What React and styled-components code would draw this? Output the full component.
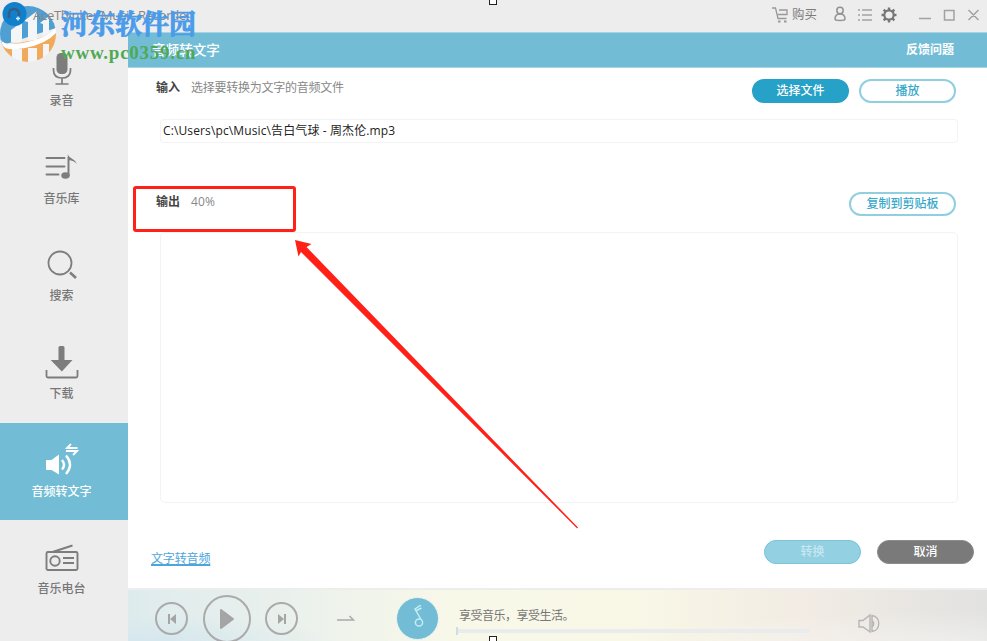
import React from "react";
import styled, { createGlobalStyle, css } from "styled-components";

const Global = createGlobalStyle`
  * { box-sizing: border-box; }
  body { margin: 0; background: #fff; overflow: hidden; }
  svg { display: block; flex: none; }
`;

const Window = styled.div`
  position: relative;
  width: 987px;
  height: 641px;
  overflow: hidden;
  display: flex;
  flex-direction: column;
  background: #fff;
  color: #444;
  font: 12px/16px "Open Sans", "Noto Sans CJK SC", sans-serif;
`;

const TitleBar = styled.header`
  height: 32px;
  flex: none;
  display: flex;
  align-items: center;
  padding: 0 5px 2px 33px;
  background: #ededed;
  color: #858585;
`;
const AppName = styled.span`
  position: relative;
  z-index: 1;
  flex: 1;
  font-size: 13px;
  letter-spacing: -0.28px;
`;
const Tools = styled.div`
  display: flex;
  align-items: center;
  width: 210px;
  padding-bottom: 1px;
`;
const Buy = styled.span`
  width: 38px;
  margin-left: 3px;
  font-size: 12.4px;
  color: #7c7c7c;
`;

const Body = styled.div`
  flex: 1;
  min-height: 0;
  display: flex;
`;
const Sidebar = styled.nav`
  width: 128px;
  flex: none;
  background: #ededed;
`;
const NavItem = styled.div`
  height: 97.7px;
  display: flex;
  flex-direction: column;
  align-items: center;
  justify-content: flex-start;
  padding: 16px 5px 0 0;
  font-size: 12px;
  font-weight: 500;
  color: #777;
  ${(p) => p.$active && css`background: #72bdd5; color: #fff;`}
`;
const NavLabel = styled.span`
  margin-top: 1px;
`;

const Main = styled.main`
  flex: 1;
  min-width: 0;
  display: flex;
  flex-direction: column;
`;
const Header = styled.div`
  height: 36px;
  flex: none;
  display: flex;
  align-items: center;
  justify-content: space-between;
  padding: 0 33px 1px 24px;
  background: #72bdd5;
  border-top: 1px solid #a5d5e4;
  border-bottom: 1px solid #a5d5e4;
  color: #fff;
  font-weight: 600;
`;
const PageTitle = styled.h1`
  margin: 0;
  font-size: 13.6px;
  font-weight: 500;
`;
const Content = styled.div`
  flex: 1;
  display: flex;
  flex-direction: column;
  padding: 0 29px 0 32px;
`;
const SectionRow = styled.div`
  display: flex;
  align-items: flex-start;
  height: ${(p) => p.$height}px;
  margin: ${(p) => p.$top}px 2px 0 -4px;
`;
const SectionName = styled.strong`
  width: 35px;
  padding-top: ${(p) => p.$drop || 1}px;
  font-weight: 600;
  color: #444;
`;
const Hint = styled.span`
  flex: 1;
  padding-top: ${(p) => p.$drop || 1}px;
  font-size: 12px;
  color: #888;
  letter-spacing: ${(p) => p.$spacing || -0.25}px;
`;
const Pill = styled.button`
  height: 24px;
  width: ${(p) => p.$width || 97}px;
  margin: 0 0 0 ${(p) => p.$gap || 0}px;
  padding: 0 0 2px;
  border-radius: 12px;
  border: 2px solid #90cfe0;
  background: #fff;
  color: #38a8ca;
  font: 500 12px/16px "Noto Sans CJK SC", sans-serif;
  ${(p) => p.$kind === "primary" && css`background: #26a1c7; border-color: #26a1c7; color: #fff;`}
  ${(p) => p.$kind === "disabled" && css`background: #93d0e1; border: 1px solid #7bc3d8; color: #c7e8f1;`}
  ${(p) => p.$kind === "cancel" && css`background: #7a7a7a; border: 1px solid #8b8b8b; color: #fff;`}
`;
const PathField = styled.div`
  height: 24px;
  width: 798px;
  border: 1px solid #f3f3f3;
  border-radius: 4px;
  padding: 3px 2px;
  color: #222;
  font-size: 12px;
  letter-spacing: 0.12px;
`;
const OutputBox = styled.div`
  height: 271px;
  width: 798px;
  border: 1px solid #f3f3f3;
  border-radius: 5px;
`;
const Actions = styled.div`
  display: flex;
  align-items: flex-start;
  margin: 37px -16px 0 -9px;
`;
const TextLink = styled.a`
  flex: 1;
  margin-top: 11px;
  color: #4da5dc;
  letter-spacing: -0.15px;
  text-decoration: underline;
  text-decoration-thickness: 1.5px;
  text-underline-offset: 1px;
`;

const Player = styled.footer`
  height: 53px;
  flex: none;
  overflow: hidden;
  display: flex;
  align-items: flex-start;
  border-top: 2px solid #ededed;
  padding-left: 27px;
  background:
    radial-gradient(ellipse 300px 30px at 96% 100%, rgba(255,255,255,.35), transparent),
    radial-gradient(ellipse 170px 26px at 4% 100%, rgba(207,228,238,.6), transparent),
    linear-gradient(90deg, #deebed 0%, #ebf1ec 20%, #f8f8e9 38%, #f9f8e7 58%, #f2ece4 78%, #e2e2e1 100%);
`;
const Controls = styled.div`
  display: flex;
  align-items: flex-start;
  width: 303px;
`;
const Round = styled.div`
  width: ${(p) => p.$size}px;
  height: ${(p) => p.$size}px;
  margin: ${(p) => p.$top}px ${(p) => p.$right || 0}px 0 0;
  border: 2px solid #aaa;
  border-radius: 50%;
  flex: none;
  display: flex;
  align-items: center;
  justify-content: center;
`;
const Disc = styled(Round)`
  border: 1.5px solid #eef4ef;
  background: #72bdd5;
`;
const Shuffle = styled.div`
  width: 60px;
  padding: 24px 0 0 1px;
`;
const Track = styled.div`
  width: 400px;
  padding: 18px 0 0 1px;
  color: #777;
  letter-spacing: -0.5px;
`;
const Seek = styled.div`
  height: 8px;
  width: 354px;
  margin: 3px 0 0 -3px;
  border-left: 2px solid #ccdee7;
  display: flex;
  align-items: center;
  &::after { content: ""; height: 4px; flex: 1; background: #e9ebec; }
`;
const Volume = styled.div`
  padding-top: 23px;
`;
const Overlay = styled.svg`
  position: absolute;
  inset: 0;
  pointer-events: none;
`;
const Watermark = styled.div`
  position: absolute;
  z-index: 2;
  left: 61px;
  top: 9px;
  white-space: nowrap;
  font-family: "Liberation Serif", "Noto Serif CJK SC", "Noto Sans CJK SC", serif;
  font-weight: 700;
`;
const SiteName = styled.div`
  font-size: 27px;
  line-height: 33px;
  color: #4a9bea;
  -webkit-text-stroke: 0.8px #4a9bea;
`;
const SiteUrl = styled.div`
  font-size: 19px;
  line-height: 21px;
  letter-spacing: 0.75px;
  color: #4fa953;
`;
const Handle = styled.div`
  position: absolute;
  left: 489px;
  ${(p) => (p.$bottom ? "bottom: -3px;" : "top: -3px;")}
  width: 8px;
  height: 8px;
  border: 1px solid #222;
  background: #fff;
`;

const MicIcon = () => (
  <svg width="34" height="44" viewBox="0 0 34 44" fill="none" stroke="#7d7d7d" strokeWidth="1.7">
    <rect x="11.500" y="5" width="11" height="21" rx="4.500" fill="#7d7d7d" stroke="none" />
    <path d="M8.500 20v2c0 6 4 8 8.500 8s8.500-2 8.500-8v-2M17 30v6M10.500 36h13" />
  </svg>
);
const LibraryIcon = () => (
  <svg width="34" height="44" viewBox="0 0 34 44" fill="none" stroke="#7d7d7d" strokeWidth="2" strokeLinecap="round">
    <path d="M1.500 12h18M1.500 20.500h18M1.500 28.500h12" />
    <path d="M23.500 30V11" strokeLinecap="butt" />
    <path d="M22.500 8.500q2 3 5 4.500t4.500 5q-3-3.500-8.500-4z" fill="#7d7d7d" stroke="none" />
    <ellipse cx="20.500" cy="29.500" rx="4.200" ry="3.300" fill="#7d7d7d" stroke="none" />
  </svg>
);
const SearchIcon = () => (
  <svg width="34" height="44" viewBox="0 0 34 44" fill="none" stroke="#7d7d7d">
    <circle cx="15" cy="20" r="11.500" strokeWidth="1.8" />
    <path d="M25 29.500l6 5.500" strokeWidth="2.600" />
  </svg>
);
const DownloadIcon = () => (
  <svg width="34" height="44" viewBox="0 0 34 44">
    <path d="M15 5h3q1.500 0 1.500 1.500V19h8L16.800 30.500 5.700 19h7.800V6.500Q13.500 5 15 5z" fill="#7d7d7d" />
    <path d="M1.500 29v6q0 1.500 1.500 1.500h28q1.500 0 1.500-1.500v-6" fill="none" stroke="#7d7d7d" strokeWidth="1.8" />
  </svg>
);
const SpeechIcon = () => (
  <svg width="34" height="44" viewBox="0 0 34 44" fill="none" stroke="#fff">
    <path d="M1 22q0-1 1-1h4.500l7.500-5.500v20L6.500 31H2q-1 0-1-1z" fill="#fff" stroke="none" />
    <path d="M17 21q4 5 0 9.500M21 16.500q8 9 0 18.500" strokeWidth="2.400" />
    <path d="M32.500 9H22l4-4M21 12h11l-4 4" strokeWidth="1.800" />
  </svg>
);
const RadioIcon = () => (
  <svg width="34" height="44" viewBox="0 0 34 44" fill="none" stroke="#7d7d7d" strokeWidth="1.900">
    <rect x="1.500" y="16" width="31" height="18" rx="1.500" />
    <circle cx="10" cy="25" r="4.700" />
    <path d="M18 22h11M18 27h11M7.500 16l20-6.500" />
  </svg>
);

const NAV = [
  ["录音", MicIcon],
  ["音乐库", LibraryIcon],
  ["搜索", SearchIcon],
  ["下载", DownloadIcon],
  ["音频转文字", SpeechIcon],
  ["音乐电台", RadioIcon],
];

const GEAR = [0, 45, 90, 135, 180, 225, 270, 315];

const ToolIcons = () => (
  <svg width="150" height="28" viewBox="0 0 150 28" fill="none" stroke="#a2a2a2" strokeWidth="1.5">
    <circle cx="10" cy="9.500" r="3.200" stroke="#929292" />
    <path d="M10 13c-3.500 0-5 2-5 5q0 1.500 5 1.500t5-1.500c0-3-1.500-5-5-5z" stroke="#929292" />
    <path d="M28 9h2M32 9h10M28 14h2M32 14h10M28 19h2M32 19h10" strokeWidth="1.300" />
    <g stroke="#777" strokeWidth="2.400">
      <circle cx="59" cy="14" r="4.700" strokeWidth="2.200" />
      {GEAR.map((a) => <path key={a} d="M59 6.500v3" transform={`rotate(${a} 59 14)`} />)}
    </g>
    <path d="M89 17.500h12M114.500 9.500h9.500v9.500h-9.500zM138.500 9l10 10M148.500 9l-10 10" />
  </svg>
);
const CartIcon = () => (
  <svg width="17" height="18" viewBox="0 0 17 18" fill="none" stroke="#999" strokeWidth="1.300">
    <path d="M0 2h3.500l2.500 10.500h8.500M7 4h8v4.500H6" />
    <path d="M6 15.500h2.500M12 15.500h2.500" strokeWidth="2" />
  </svg>
);

export default function App() {
  return (
    <Window>
      <Global />
      <TitleBar>
        <AppName>AceThinker Music Recorder</AppName>
        <Tools>
          <CartIcon />
          <Buy>购买</Buy>
          <ToolIcons />
        </Tools>
      </TitleBar>
      <Body>
        <Sidebar>
          {NAV.map(([label, Icon]) => (
            <NavItem key={label} $active={label === "音频转文字"}>
              <Icon />
              <NavLabel>{label}</NavLabel>
            </NavItem>
          ))}
        </Sidebar>
        <Main>
          <Header>
            <PageTitle>音频转文字</PageTitle>
            <span>反馈问题</span>
          </Header>
          <Content>
            <SectionRow $top={11} $height={40}>
              <SectionName>输入</SectionName>
              <Hint>选择要转换为文字的音频文件</Hint>
              <Pill $kind="primary">选择文件</Pill>
              <Pill $gap={10}>播放</Pill>
            </SectionRow>
            <PathField>C:\Users\pc\Music\告白气球 - 周杰伦.mp3</PathField>
            <SectionRow $top={49} $height={40}>
              <SectionName $drop={2}>输出</SectionName>
              <Hint $drop={2} $spacing={0.1}>40%</Hint>
              <Pill $width={107}>复制到剪贴板</Pill>
            </SectionRow>
            <OutputBox />
            <Actions>
              <TextLink>文字转音频</TextLink>
              <Pill $kind="disabled">转换</Pill>
              <Pill $kind="cancel" $gap={16}>取消</Pill>
            </Actions>
          </Content>
          <Player>
            <Controls>
              <Round $size={33} $top={12} $right={15}>
                <svg width="10" height="12" viewBox="0 0 10 12"><path d="M1 1h2v10H1zM9 1v10L3 6z" fill="#a5a5a5" /></svg>
              </Round>
              <Round $size={48} $top={5} $right={14}>
                <svg width="18" height="22" viewBox="0 0 18 22"><path d="M3 2l12 9-12 9z" fill="#a5a5a5" stroke="#a5a5a5" strokeWidth="2" strokeLinejoin="round" /></svg>
              </Round>
              <Round $size={33} $top={12} $right={38}>
                <svg width="10" height="12" viewBox="0 0 10 12"><path d="M7 1h2v10H7zM1 1v10l6-5z" fill="#a5a5a5" /></svg>
              </Round>
              <Shuffle>
                <svg width="18" height="10" viewBox="0 0 18 10" fill="none" stroke="#aaa" strokeWidth="1.500"><path d="M0 6h16.500l-4-4" /></svg>
              </Shuffle>
              <Disc $size={43} $top={7}>
                <svg width="18" height="28" viewBox="0 0 18 28" fill="none" stroke="#c4edf5" strokeWidth="1.500"><circle cx="10" cy="17.500" r="3.600" /><path d="M12 14.500L6 4l6-4M6.500 6l6-3" /></svg>
              </Disc>
            </Controls>
            <Track>
              享受音乐，享受生活。
              <Seek />
            </Track>
            <Volume>
              <svg width="22" height="22" viewBox="0 0 22 22" fill="none" stroke="#b5b5b3" strokeWidth="1.400"><path d="M1 7.500h4l7-5.500v17l-7-5H1zM14 7.500q3.500 3 0 6.500M14 2.500c9 1 9 15 0 16z" /></svg>
            </Volume>
          </Player>
        </Main>
      </Body>
      <Overlay width="987" height="641" viewBox="0 0 987 641">
        <rect x="134.500" y="187.500" width="160" height="43" rx="1.500" fill="none" stroke="#ff2017" strokeWidth="3" />
        <path d="M295 240l16.500 4-5 3L578 527.500l-.8 1L301 252l-2.500 4.500z" fill="#ff2017" />
        <defs><clipPath id="seal"><circle cx="28" cy="34" r="28" /></clipPath></defs>
        <g clipPath="url(#seal)" opacity="0.93">
          <path d="M0 0h56v28Q34 35 0 46z" fill="#4499d0" />
          <path d="M0 45Q34 43 56 31v35H0z" fill="#f2a550" />
          <path d="M11 42V30l11-8v20zM28 41V22l-4-1 13-10v29zM43 36V24l-3-1 9-7v17zM12 49h10v15H12zM28 48h9v16h-9zM43 44h6v16h-6z" fill="#f4f6f7" />
          <path d="M1 40Q5 47 27 42T56 27v6Q46 44 25 48T2 44z" fill="#fff" />
        </g>
        <circle cx="14.500" cy="14" r="12" fill="#127fcb" />
        <path d="M9 18v-4a5 5 0 0 1 10 0v2" fill="none" stroke="#345f83" strokeWidth="2.500" />
        <path d="M18 16.500v4M16 18.500h4" stroke="#d9efff" strokeWidth="1.300" />
      </Overlay>
      <Watermark>
        <SiteName>河东软件园</SiteName>
        <SiteUrl>www.pc0359.cn</SiteUrl>
      </Watermark>
      <Handle />
      <Handle $bottom />
    </Window>
  );
}
